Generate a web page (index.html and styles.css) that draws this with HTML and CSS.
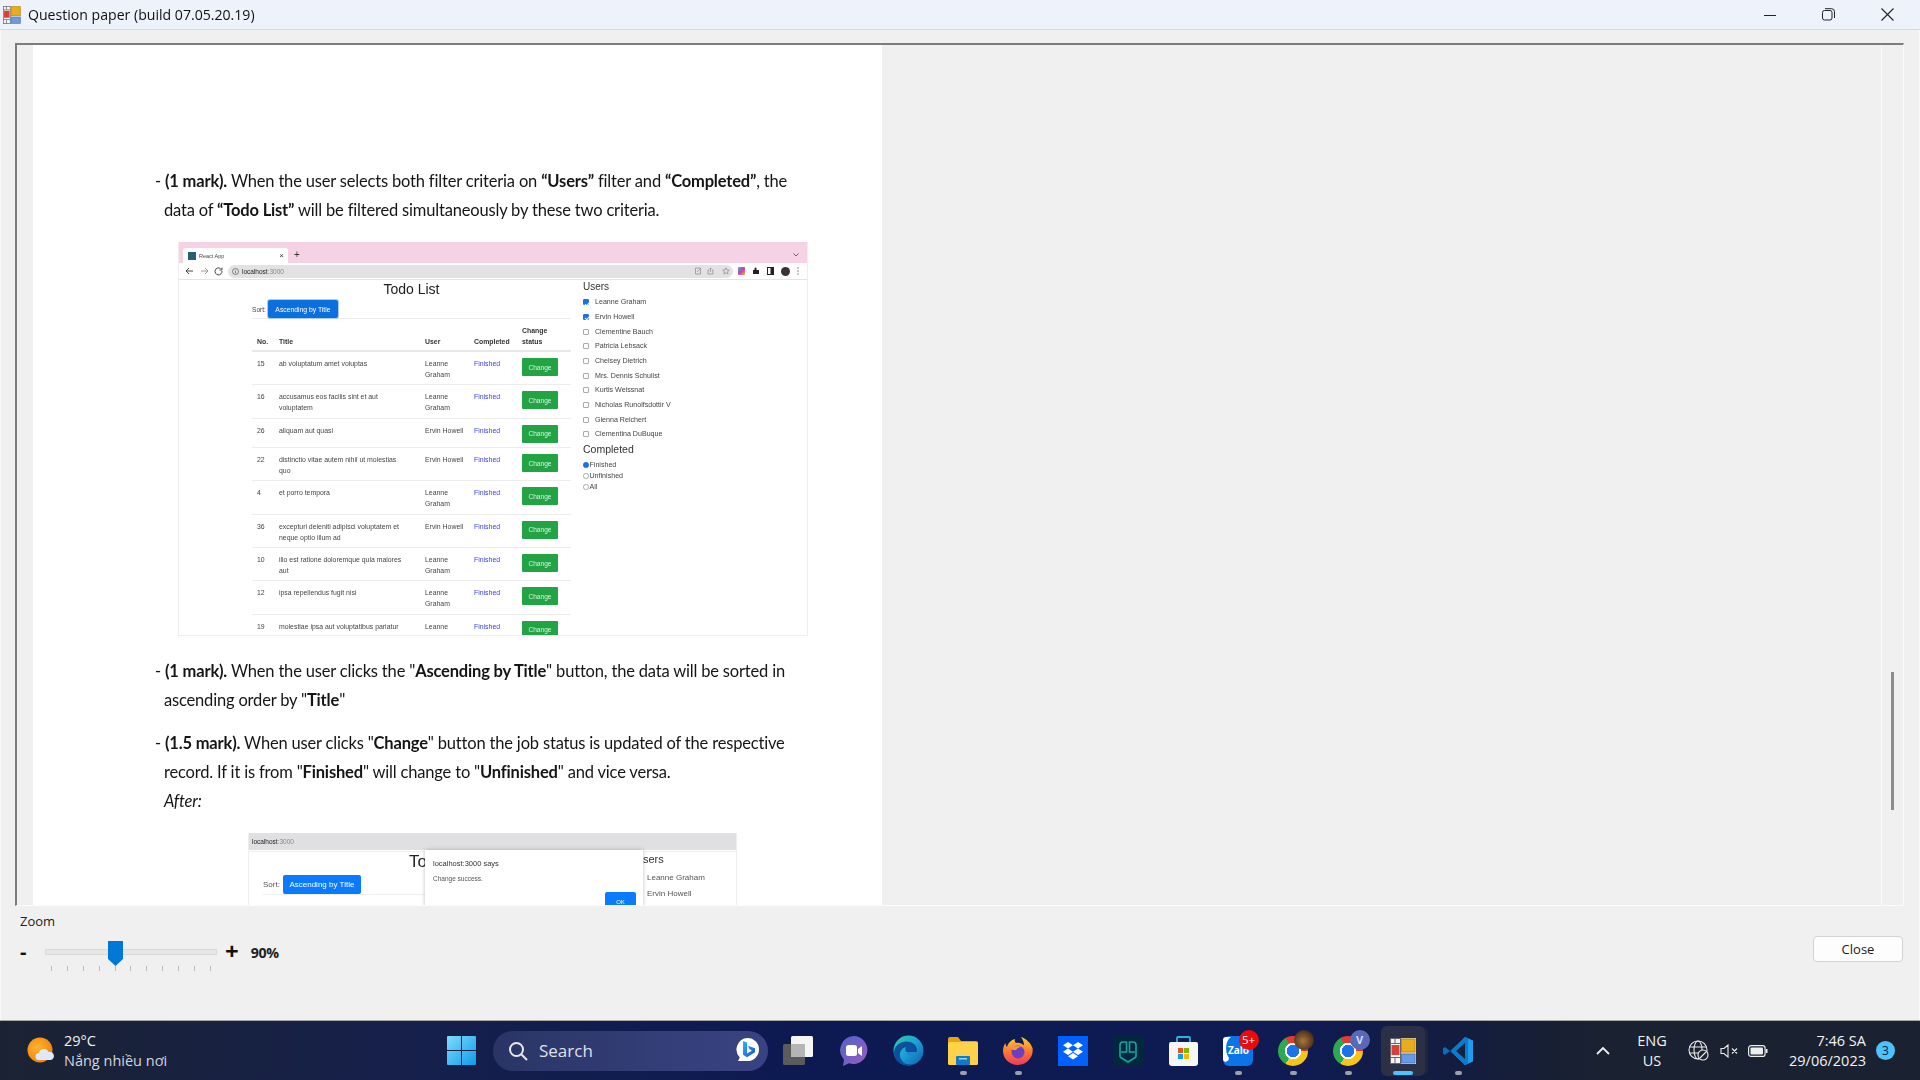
FILE: index.html
```html
<!DOCTYPE html>
<html lang="en">
<head>
<meta charset="UTF-8">
<meta name="viewport" content="width=device-width, initial-scale=1.0">
<title>Question paper</title>
<link rel="stylesheet" href="styles.css">
</head>
<body>
  <svg class="defs" width="0" height="0">
    <defs>
      <symbol id="app-icon" viewBox="0 0 26 26">
        <rect x="0" y="0" width="26" height="26" fill="#e6e8ec"/>
        <rect x="0.5" y="0.5" width="10" height="25" fill="#f4f4f4" stroke="#666"/>
        <path d="M0 5.5h10M0 19.5h10M5 20v6M5 0v5" stroke="#666"/>
        <rect x="1.500" y="7" width="8" height="10" fill="#d9403a"/>
        <rect x="11.500" y="1" width="13.500" height="13" fill="#e9ac1c" stroke="#c08a08"/>
        <rect x="11.500" y="16" width="13.500" height="9" fill="#6a9ae4" stroke="#4a7bc4"/>
      </symbol>
      <linearGradient id="win-grad" x1="0" y1="0" x2="1" y2="1">
        <stop offset="0" stop-color="#7fdcff"/>
        <stop offset="1" stop-color="#0b9be8"/>
      </linearGradient>
      <linearGradient id="meet-grad" x1="0" y1="0" x2="1" y2="1">
        <stop offset="0" stop-color="#4f63c9"/>
        <stop offset="1" stop-color="#9a5cc0"/>
      </linearGradient>
      <linearGradient id="edge-grad" x1="0" y1="0" x2="1" y2="1">
        <stop offset="0" stop-color="#2fd0a0"/>
        <stop offset="0.5" stop-color="#1c9fd8"/>
        <stop offset="1" stop-color="#0f5fa8"/>
      </linearGradient>
      <linearGradient id="fox-grad" x1="0" y1="0" x2="0" y2="1">
        <stop offset="0" stop-color="#ffcf3a"/>
        <stop offset="0.5" stop-color="#ff7a2e"/>
        <stop offset="1" stop-color="#f0385f"/>
      </linearGradient>
      <linearGradient id="bing-grad" x1="0" y1="0" x2="1" y2="1">
        <stop offset="0" stop-color="#2bb5f5"/>
        <stop offset="1" stop-color="#1a4fe0"/>
      </linearGradient>
      <radialGradient id="sun-grad" cx="0.4" cy="0.4" r="0.7">
        <stop offset="0" stop-color="#ffb52e"/>
        <stop offset="1" stop-color="#ee7d0c"/>
      </radialGradient>
    </defs>
  </svg>

  <header class="titlebar">
    <svg class="title-icon"><use href="#app-icon"/></svg>
    <span class="title-text">Question paper (build 07.05.20.19)</span>
    <div class="win-controls">
      <svg width="12" height="12" viewBox="0 0 12 12"><path d="M0 6.5h12" stroke="#222" stroke-width="1"/></svg>
      <svg width="13" height="13" viewBox="0 0 13 13" fill="none" stroke="#222"><rect x="0.5" y="2.5" width="9.5" height="9.5" rx="2"/><path d="M3 0.7h6.5a3 3 0 0 1 3 3V10"/></svg>
      <svg width="13" height="13" viewBox="0 0 13 13"><path d="M0.5 0.5l12 12M12.5 0.5l-12 12" stroke="#222" stroke-width="1.1"/></svg>
    </div>
  </header>

  <div class="window">
    <div class="viewer">
      <div class="doc-area">
        <div class="page">
          <p class="para">- <b>(1 mark).</b> When the user selects both filter criteria on <b>“Users”</b> filter and <b>“Completed”</b>, the data of <b>“Todo List”</b> will be filtered simultaneously by these two criteria.</p>

          <div class="shot">
            <div class="tabstrip">
              <div class="tab">
                <span class="favicon"></span>
                <span class="tab-name">React App</span>
                <span class="tab-x">×</span>
              </div>
              <span class="tab-plus">+</span>
              <svg class="tab-caret" width="6" height="4" viewBox="0 0 6 4"><path d="M0.5 0.5L3 3l2.5-2.5" fill="none" stroke="#666"/></svg>
            </div>
            <div class="toolbar">
              <svg width="44" height="10" viewBox="0 0 44 10" fill="none" stroke="#444">
                <path d="M9 5H2M5 2L2 5l3 3"/>
                <path d="M17 5h7M21 2l3 3-3 3" stroke="#999"/>
                <path d="M36.500 2.500A3.500 3.500 0 1 0 38 5M38 1.500v2.500h-2.500"/>
              </svg>
              <div class="addr">
                <svg width="7" height="7" viewBox="0 0 7 7" fill="none" stroke="#555" stroke-width="0.7"><circle cx="3.500" cy="3.500" r="3"/><path d="M3.500 3v2.200M3.500 1.800v0.600"/></svg>
                <span class="addr-host">localhost</span><span class="addr-port">:3000</span>
                <svg class="addr-tools" width="36" height="8" viewBox="0 0 36 8" fill="none" stroke="#888" stroke-width="0.7">
                  <path d="M0.500 1h5v6h-5zM2 5l3-3"/>
                  <path d="M14 3h-1v4h5V3h-1M15.500 5V1M14.500 2l1-1 1 1"/>
                  <path d="M31 0.800l1 2.200 2.300 0.200-1.800 1.500 0.600 2.300-2.100-1.300-2.100 1.300 0.600-2.300-1.800-1.500 2.300-0.200z"/>
                </svg>
              </div>
              <div class="tool-icons">
                <span class="ext-color"></span>
                <svg width="8" height="8" viewBox="0 0 8 8"><path d="M1 3h1.500V1.500a1 1 0 0 1 2 0V3H7v4H1z" fill="#222"/></svg>
                <svg width="7" height="8" viewBox="0 0 7 8"><rect x="0.500" y="0.500" width="6" height="7" fill="none" stroke="#222"/><rect x="3.500" y="0.500" width="3" height="7" fill="#222"/></svg>
                <span class="profile"></span>
                <svg width="2" height="8" viewBox="0 0 2 8" fill="#666"><circle cx="1" cy="1" r="0.700"/><circle cx="1" cy="4" r="0.700"/><circle cx="1" cy="7" r="0.700"/></svg>
              </div>
            </div>
            <div class="app">
              <div class="app-main">
                <h3 class="app-title">Todo List</h3>
                <div class="sort-row">
                  <span>Sort:</span>
                  <span class="btn-blue focused">Ascending by Title</span>
                </div>
                <table class="todo">
                  <thead>
                    <tr><th class="c-no">No.</th><th class="c-title">Title</th><th class="c-user">User</th><th class="c-done">Completed</th><th class="c-act">Change<br>status</th></tr>
                  </thead>
                  <tbody>
                    <tr><td>15</td><td>ab voluptatum amet voluptas</td><td>Leanne Graham</td><td class="done">Finished</td><td><span class="btn-green">Change</span></td></tr>
                    <tr><td>16</td><td>accusamus eos facilis sint et aut voluptatem</td><td>Leanne Graham</td><td class="done">Finished</td><td><span class="btn-green">Change</span></td></tr>
                    <tr><td>26</td><td>aliquam aut quasi</td><td>Ervin Howell</td><td class="done">Finished</td><td><span class="btn-green">Change</span></td></tr>
                    <tr><td>22</td><td>distinctio vitae autem nihil ut molestias quo</td><td>Ervin Howell</td><td class="done">Finished</td><td><span class="btn-green">Change</span></td></tr>
                    <tr><td>4</td><td>et porro tempora</td><td>Leanne Graham</td><td class="done">Finished</td><td><span class="btn-green">Change</span></td></tr>
                    <tr><td>36</td><td>excepturi deleniti adipisci voluptatem et neque optio illum ad</td><td>Ervin Howell</td><td class="done">Finished</td><td><span class="btn-green">Change</span></td></tr>
                    <tr><td>10</td><td>illo est ratione doloremque quia maiores aut</td><td>Leanne Graham</td><td class="done">Finished</td><td><span class="btn-green">Change</span></td></tr>
                    <tr><td>12</td><td>ipsa repellendus fugit nisi</td><td>Leanne Graham</td><td class="done">Finished</td><td><span class="btn-green">Change</span></td></tr>
                    <tr><td>19</td><td>molestiae ipsa aut voluptatibus pariatur dolor nihil</td><td>Leanne Graham</td><td class="done">Finished</td><td><span class="btn-green">Change</span></td></tr>
                  </tbody>
                </table>
              </div>
              <aside class="app-side">
                <h4 class="side-head">Users</h4>
                <ul class="user-list">
                  <li><span class="check on"></span>Leanne Graham</li>
                  <li><span class="check on"></span>Ervin Howell</li>
                  <li><span class="check"></span>Clementine Bauch</li>
                  <li><span class="check"></span>Patricia Lebsack</li>
                  <li><span class="check"></span>Chelsey Dietrich</li>
                  <li><span class="check"></span>Mrs. Dennis Schulist</li>
                  <li><span class="check"></span>Kurtis Weissnat</li>
                  <li><span class="check"></span>Nicholas Runolfsdottir V</li>
                  <li><span class="check"></span>Glenna Reichert</li>
                  <li><span class="check"></span>Clementina DuBuque</li>
                </ul>
                <h4 class="side-head second">Completed</h4>
                <ul class="radio-list">
                  <li><span class="radio on"></span>Finished</li>
                  <li><span class="radio"></span>Unfinished</li>
                  <li><span class="radio"></span>All</li>
                </ul>
              </aside>
            </div>
          </div>

          <p class="para gap-a">- <b>(1 mark).</b> When the user clicks the "<b>Ascending by Title</b>" button, the data will be sorted in ascending order by "<b>Title</b>"</p>
          <p class="para gap-b">- <b>(1.5 mark).</b> When user clicks "<b>Change</b>" button the job status is updated of the respective record. If it is from "<b>Finished</b>" will change to "<b>Unfinished</b>" and vice versa.<br><i>After:</i></p>

          <div class="shot2">
            <div class="addr2"><span class="addr-host">localhost</span><span class="addr-port">:3000</span></div>
            <div class="app2">
              <div class="app2-left">
                <div class="app2-title">To</div>
                <div class="sort-row2">
                  <span>Sort:</span>
                  <span class="btn-blue big">Ascending by Title</span>
                </div>
              </div>
              <div class="dialog">
                <div class="dialog-head">localhost:3000 says</div>
                <div class="dialog-msg">Change success.</div>
                <div class="dialog-foot"><span class="btn-ok">OK</span></div>
              </div>
              <div class="app2-right">
                <div class="app2-users">sers</div>
                <div class="app2-name">Leanne Graham</div>
                <div class="app2-name">Ervin Howell</div>
              </div>
            </div>
          </div>
        </div>
      </div>
      <div class="scroll-track"><div class="scroll-thumb"></div></div>
    </div>

    <div class="controls">
      <div class="zoom-group">
        <div class="zoom-label">Zoom</div>
        <div class="zoom-row">
          <span class="zoom-minus">-</span>
          <div class="slider">
            <div class="slider-track"></div>
            <div class="slider-thumb"></div>
            <div class="slider-ticks">
              <i></i><i></i><i></i><i></i><i></i><i></i><i></i><i></i><i></i><i></i><i></i>
            </div>
          </div>
          <span class="zoom-plus">+</span>
          <span class="zoom-value">90%</span>
        </div>
      </div>
      <button class="close-btn">Close</button>
    </div>
  </div>

  <footer class="taskbar">
    <div class="weather">
      <svg width="28" height="28" viewBox="0 0 28 28">
        <circle cx="13" cy="13" r="12.500" fill="url(#sun-grad)"/>
        <path d="M12 23a3.500 3.500 0 0 1 0-7 5 5 0 0 1 9.500-1 4 4 0 0 1 2.500 8z" fill="#dbe9f8"/>
      </svg>
      <div class="weather-text">
        <div>29°C</div>
        <div class="weather-sub">Nắng nhiều nơi</div>
      </div>
    </div>

    <div class="start">
      <svg width="29" height="29" viewBox="0 0 29 29" fill="url(#win-grad)">
        <path d="M1 0h13v14H0V1a1 1 0 0 1 1-1zM15 0h13a1 1 0 0 1 1 1v13H15zM0 15h14v14H1a1 1 0 0 1-1-1zM15 15h14v13a1 1 0 0 1-1 1H15z"/>
      </svg>
    </div>

    <div class="searchbox">
      <svg width="20" height="20" viewBox="0 0 20 20" fill="none" stroke="#e8e8ee" stroke-width="2"><circle cx="8.500" cy="8.500" r="6.500"/><path d="M13.500 13.500L19 19"/></svg>
      <span class="search-text">Search</span>
      <svg class="bing" width="25" height="27" viewBox="0 0 25 27">
        <path d="M12.500 1a11.500 11.500 0 1 1 0 23H3l1.800-3.500A11.500 11.500 0 0 1 12.500 1z" fill="#fff"/>
        <path d="M8 4l4 1.500v11l5-3-2.500-1.200-1.500-3.500 7 2.500v4l-8 5-4-2.500z" fill="url(#bing-grad)"/>
      </svg>
    </div>

    <div class="task-icons">
      <div class="slot">
        <svg width="30" height="29" viewBox="0 0 30 29">
          <rect x="0" y="8" width="22" height="21" rx="1.500" fill="#5b5b5b"/>
          <rect x="8" y="0" width="22" height="21" rx="1.500" fill="#f5f5f5"/>
          <rect x="8" y="8" width="14" height="13" fill="#b5b5b5"/>
        </svg>
      </div>
      <div class="slot">
        <svg width="29" height="30" viewBox="0 0 29 30">
          <path d="M14.500 0a14 14 0 1 1-4.500 27.300L4 30l1-6.500A14 14 0 0 1 14.500 0z" fill="url(#meet-grad)"/>
          <rect x="7" y="9" width="11" height="11" rx="2.500" fill="#fff"/>
          <path d="M19 13l4-3v10l-4-3z" fill="#fff"/>
        </svg>
      </div>
      <div class="slot">
        <svg width="31" height="31" viewBox="0 0 31 31">
          <circle cx="15.500" cy="15.500" r="15" fill="url(#edge-grad)"/>
          <path d="M1 17C2 9 10 5 17 7c6 1.700 8 7 6.500 10H14c-3-1-1-5-1-5-7 2-8 10-3 15 4 3.500 10 3 14 .5-6 6-23 4-23-10.500z" fill="#0c4f9c"/>
          <path d="M14 17h9.500c-1 4-6 5-8.500 3-1-.8-1.200-2-1-3z" fill="#1f86d0"/>
        </svg>
      </div>
      <div class="slot pip">
        <svg width="30" height="28" viewBox="0 0 30 28">
          <path d="M0 2a2 2 0 0 1 2-2h8l3 4h15a2 2 0 0 1 2 2v4H0z" fill="#e8a313"/>
          <rect x="0" y="5" width="30" height="23" rx="1.500" fill="#ffd24a"/>
          <rect x="8" y="19" width="14" height="9" rx="1" fill="#1079c9"/>
          <rect x="11" y="21" width="8" height="1.500" fill="#9ad4f8"/>
        </svg>
      </div>
      <div class="slot pip">
        <svg width="30" height="31" viewBox="0 0 30 31">
          <path d="M15 30C6 30 0 23.500 0 16c0-3 .8-6 2.500-8 0 2 .6 3 1.500 4 1-4 4-7 8-8-.5 2 0 3 1 4 3-.5 6 .5 8 2.500 0-3-1-6-3-8.500 4 1 10 6 11.500 11 1.500 8-5 17-14.500 17z" fill="url(#fox-grad)"/>
          <circle cx="15" cy="17" r="6.500" fill="#6a3fc4"/>
          <path d="M8 14c3-3 7-4 11-2-3 0-5 1-6 3-1.500 0-3.500 0-5-1z" fill="#ff9a2e"/>
        </svg>
      </div>
      <div class="slot">
        <svg width="30" height="30" viewBox="0 0 30 30">
          <rect width="30" height="30" fill="#0061ff"/>
          <path d="M10 6l5 3.200-5 3.200-5-3.200zM20 6l5 3.200-5 3.200-5-3.200zM10 12.600l5 3.200-5 3.200-5-3.200zM20 12.600l5 3.200-5 3.200-5-3.200zM15 17l5 3.200-5 3.200-5-3.200z" fill="#fff"/>
        </svg>
      </div>
      <div class="slot">
        <svg width="30" height="30" viewBox="0 0 30 30" fill="none" stroke="#16a3a8" stroke-width="1.600">
          <rect width="30" height="30" fill="#01283c" stroke="none"/>
          <path d="M7 21V9a3 3 0 0 1 3-3h3.500v10H8M23 21V9a3 3 0 0 0-3-3h-3.500v10H22M7 21l8 5 8-5"/>
        </svg>
      </div>
      <div class="slot">
        <svg width="29" height="30" viewBox="0 0 29 30">
          <path d="M8 6V2a1 1 0 0 1 1-1h11a1 1 0 0 1 1 1v4" fill="none" stroke="#2bb4dc" stroke-width="1.800"/>
          <path d="M0 8a2 2 0 0 1 2-2h25a2 2 0 0 1 2 2v19a3 3 0 0 1-3 3H3a3 3 0 0 1-3-3z" fill="#f6f6f6"/>
          <rect x="9" y="12" width="5" height="5" fill="#f25022"/>
          <rect x="15" y="12" width="5" height="5" fill="#7fba00"/>
          <rect x="9" y="18" width="5" height="5" fill="#00a4ef"/>
          <rect x="15" y="18" width="5" height="5" fill="#ffb900"/>
        </svg>
      </div>
      <div class="slot pip">
        <svg width="30" height="30" viewBox="0 0 30 30">
          <path d="M6 0h18a6 6 0 0 1 6 6v18a6 6 0 0 1-6 6H6a6 6 0 0 1-6-6V6a6 6 0 0 1 6-6z" fill="#0a74e8"/>
          <path d="M2 26c3-1 4-2 4-4C1 15 3 4 8 1H3a3 3 0 0 0-3 3v20z" fill="#fff"/>
          <text x="15.500" y="18" class="zalo-text">Zalo</text>
        </svg>
        <span class="badge-red">5+</span>
      </div>
      <div class="slot pip">
        <span class="chrome"></span>
        <span class="avatar-badge"></span>
      </div>
      <div class="slot pip">
        <span class="chrome"></span>
        <span class="v-badge">V</span>
      </div>
      <div class="slot active">
        <svg width="26" height="26"><use href="#app-icon"/></svg>
      </div>
      <div class="slot pip">
        <svg width="30" height="30" viewBox="0 0 30 30">
          <path d="M22 1l8 3.500v21L22 29 8 15.500z" fill="#1f9cf0"/>
          <path d="M22 1L7 15 2 11 0 12.500v5L2 19l5-4 15 14 3-1.500v-25z" fill="#0a78c8" opacity="0.900"/>
          <path d="M22 7v16l-9-8z" fill="#10233f"/>
        </svg>
      </div>
    </div>

    <div class="tray">
      <svg class="tray-up" width="14" height="9" viewBox="0 0 14 9"><path d="M1 8l6-6 6 6" fill="none" stroke="#f0f0f0" stroke-width="1.800"/></svg>
      <div class="lang">ENG<br>US</div>
      <svg class="tray-icon globe" width="21" height="21" viewBox="0 0 21 21" fill="none" stroke="#eee" stroke-width="1.100">
        <circle cx="10" cy="10" r="9"/>
        <ellipse cx="10" cy="10" rx="4" ry="9"/>
        <path d="M1 7h18M1 13h18"/>
        <circle cx="15" cy="15" r="5" fill="#1b2230"/>
        <path d="M12 18l6-6"/>
      </svg>
      <svg class="tray-icon" width="20" height="14" viewBox="0 0 20 14" fill="none" stroke="#eee" stroke-width="1.100">
        <path d="M1 4.500h3L8 1v12L4 9.500H1zM12 4.500l5 5M17 4.500l-5 5"/>
      </svg>
      <svg class="tray-icon" width="20" height="12" viewBox="0 0 20 12">
        <rect x="0.600" y="0.600" width="16.500" height="10.800" rx="2.500" fill="none" stroke="#eee" stroke-width="1.200"/>
        <rect x="2.500" y="2.500" width="12.500" height="7" rx="1" fill="#eee"/>
        <rect x="18" y="4" width="1.500" height="4" fill="#eee"/>
      </svg>
      <div class="clock">7:46 SA<br>29/06/2023</div>
      <span class="notif">3</span>
    </div>
  </footer>
</body>
</html>
```

FILE: styles.css
```css
* {
  box-sizing: border-box;
}

html, body {
  margin: 0;
  padding: 0;
  height: 100%;
}

body {
  width: 1920px;
  height: 1080px;
  overflow: hidden;
  display: flex;
  flex-direction: column;
  font-family: "Open Sans", "Liberation Sans", sans-serif;
  background: #f0f0f0;
}

.defs {
  position: absolute;
}

/* title bar */
.titlebar {
  height: 30px;
  flex: none;
  display: flex;
  align-items: center;
  background: #eef2fa;
  border-bottom: 1px solid #d9d9d9;
  padding-left: 3px;
}

.title-icon {
  width: 18px;
  height: 18px;
}

.title-text {
  margin-left: 7px;
  font-size: 14.1px;
  color: #111;
  filter: blur(0.3px);
}

.win-controls {
  margin-left: auto;
  display: flex;
  gap: 46px;
  align-items: center;
  padding-right: 26px;
}

/* window body */
.window {
  flex: 1;
  display: flex;
  flex-direction: column;
  border-left: 1px solid #fafafa;
  border-right: 1px solid #fafafa;
  min-height: 0;
}

.viewer {
  margin: 13px 15px 0 14px;
  height: 863px;
  flex: none;
  display: flex;
  overflow: hidden;
  border-top: 2px solid #7c7c7c;
  border-left: 2px solid #7c7c7c;
  border-right: 1px solid #fbfbfb;
  border-bottom: 1px solid #fbfbfb;
}

.doc-area {
  flex: 1;
  overflow: hidden;
  padding-left: 16px;
  border-right: 1px solid #fbfbfb;
}

.scroll-track {
  width: 21px;
  flex: none;
  padding: 627px 0 0 9px;
}

.scroll-thumb {
  width: 3px;
  height: 138px;
  background: #8c8c8c;
}

.page {
  width: 849px;
  height: 1100px;
  background: #fff;
  padding: 122px 0 0 121px;
}

.para {
  margin: 0;
  width: 650px;
  padding-left: 10px;
  text-indent: -9px;
  font-family: Lato, "Open Sans", sans-serif;
  font-size: 16.5px;
  line-height: 29px;
  color: #151515;
  letter-spacing: -0.18px;
  filter: blur(0.35px);
}

.gap-a {
  margin-top: 21px;
}

.gap-b {
  margin-top: 14px;
}

/* first embedded screenshot */
.shot {
  width: 630px;
  height: 394px;
  margin: 17px 0 0 24px;
  overflow: hidden;
  background: #fff;
  border: 1px solid #eee;
  border-top: none;
  font-family: "Liberation Sans", Arial, sans-serif;
  color: #444;
  filter: blur(0.45px);
}

.tabstrip {
  height: 21px;
  background: #f5d3e4;
  display: flex;
  align-items: flex-end;
  padding-left: 4px;
}

.tab {
  width: 105px;
  height: 15px;
  background: #fff;
  border-radius: 3px 3px 0 0;
  display: flex;
  align-items: center;
  padding: 0 4px 0 5px;
  font-size: 5.5px;
}

.favicon {
  width: 8px;
  height: 8px;
  background: #2a5f70;
  margin-right: 3px;
}

.tab-x {
  margin-left: auto;
  font-size: 8px;
  color: #333;
}

.tab-plus {
  margin: 0 0 2px 6px;
  font-size: 10px;
  line-height: 12px;
  color: #333;
}

.tab-caret {
  margin: 0 8px 6px auto;
}

.toolbar {
  height: 17px;
  display: flex;
  align-items: center;
  border-bottom: 1px solid #e4e4e4;
  padding-left: 5px;
}

.addr {
  width: 505px;
  height: 13px;
  border-radius: 7px;
  background: #e2e2e4;
  display: flex;
  align-items: center;
  padding: 0 2px 0 4px;
  font-size: 6.5px;
}

.addr svg:first-child {
  margin-right: 3px;
}

.addr-host {
  color: #222;
}

.addr-port {
  color: #888;
}

.addr-tools {
  margin-left: auto;
}

.tool-icons {
  display: flex;
  align-items: center;
  gap: 7px;
  margin-left: 5px;
}

.ext-color {
  width: 7px;
  height: 8px;
  border-radius: 1px;
  background: linear-gradient(135deg, #35b6ef, #d23bb4 50%, #e9b93a);
}

.profile {
  width: 9px;
  height: 9px;
  border-radius: 50%;
  background: #3a3232;
}

.app {
  display: flex;
  padding-left: 73px;
  gap: 12px;
}

.app-main {
  width: 319px;
  flex: none;
}

.app-title {
  margin: 0;
  height: 20px;
  line-height: 18px;
  text-align: center;
  font-size: 14px;
  font-weight: 400;
  color: #222;
}

.sort-row {
  height: 19px;
  display: flex;
  align-items: center;
  gap: 2px;
  font-size: 6.6px;
  border-bottom: 1px solid #ececec;
}

.btn-blue {
  display: inline-flex;
  align-items: center;
  justify-content: center;
  background: #0b6fe0;
  color: #fff;
  border-radius: 2px;
}

.btn-blue.focused {
  width: 70px;
  height: 18px;
  font-size: 6.8px;
  box-shadow: 0 0 0 1px #a8cdf8;
}

.todo {
  width: 319px;
  margin-top: 6px;
  border-collapse: collapse;
  table-layout: fixed;
  font-size: 6.9px;
  line-height: 11px;
}

.todo th {
  text-align: left;
  vertical-align: bottom;
  font-weight: 700;
  color: #333;
  padding: 0 0 3px 5px;
  border-bottom: 2px solid #e8e8e8;
}

.c-no { width: 22px; }
.c-title { width: 146px; }
.c-user { width: 49px; }
.c-done { width: 48px; }
.c-act { width: 54px; }

.todo td {
  vertical-align: top;
  padding: 6px 3px 4.35px 5px;
  border-bottom: 1px solid #ececec;
}

.todo td:nth-child(2) {
  padding-right: 14px;
}

.todo td.done {
  color: #3a3af0;
}

.btn-green {
  display: flex;
  align-items: center;
  justify-content: center;
  width: 36px;
  height: 18px;
  background: #22a444;
  color: #d8f2de;
  border-radius: 1px;
  font-size: 6.6px;
}

.app-side {
  font-size: 7.1px;
}

.side-head {
  margin: 0;
  font-size: 10px;
  font-weight: 400;
  line-height: 14px;
  color: #333;
}

.side-head.second {
  font-size: 10.5px;
  margin-top: 0;
}

.user-list, .radio-list {
  list-style: none;
  margin: 0;
  padding: 0;
}

.user-list {
  margin-top: 1px;
}

.user-list li {
  height: 14.66px;
  display: flex;
  align-items: center;
}

.check {
  width: 6px;
  height: 6px;
  margin-right: 6px;
  border: 0.6px solid #aaa;
  border-radius: 1px;
  background: #fff;
  position: relative;
}

.check.on {
  background: #1a6ff0;
  border-color: #1a6ff0;
}

.check.on::after {
  content: "";
  position: absolute;
  left: 1.5px;
  top: 0.3px;
  width: 2px;
  height: 3.5px;
  border-right: 0.8px solid #fff;
  border-bottom: 0.8px solid #fff;
  transform: rotate(40deg);
}

.radio-list {
  margin-top: 4px;
}

.radio-list li {
  height: 11px;
  display: flex;
  align-items: center;
}

.radio {
  width: 5.5px;
  height: 5.5px;
  border: 0.6px solid #aaa;
  border-radius: 50%;
  margin-right: 1px;
}

.radio.on {
  background: #1a6ff0;
  border-color: #1a6ff0;
}

/* second embedded screenshot, clipped by the viewer */
.shot2 {
  width: 489px;
  margin: 17px 0 0 94px;
  border: 1px solid #eee;
  border-top: none;
  font-family: "Liberation Sans", Arial, sans-serif;
  color: #555;
  filter: blur(0.4px);
}

.addr2 {
  height: 17px;
  background: #e0e0e2;
  display: flex;
  align-items: center;
  padding-left: 3px;
  font-size: 6.5px;
}

.app2 {
  display: flex;
  margin-top: 1px;
  border-top: 1px solid #eee;
}

.app2-left {
  width: 176px;
  padding-left: 14px;
}

.app2-title {
  text-align: right;
  font-size: 17px;
  line-height: 20px;
  margin-right: -2px;
  color: #222;
}

.sort-row2 {
  display: flex;
  align-items: center;
  gap: 3px;
  height: 20px;
  margin-top: 3px;
  font-size: 8px;
  border-bottom: 1px solid #eee;
}

.btn-blue.big {
  width: 78px;
  height: 19px;
  background: #0a7bff;
  font-size: 8px;
}

.dialog {
  width: 218px;
  height: 100px;
  margin-top: -2px;
  background: #fff;
  box-shadow: 0 0 4px rgba(0, 0, 0, 0.25);
  padding: 9px 8px;
  font-size: 7px;
  position: relative;
}

.dialog-head {
  font-size: 7.5px;
  color: #333;
}

.dialog-msg {
  margin-top: 7px;
  font-size: 6.5px;
}

.dialog-foot {
  margin-top: 10px;
  display: flex;
  justify-content: flex-end;
}

.btn-ok {
  width: 31px;
  height: 19px;
  margin-right: -1px;
  background: #0a7bff;
  color: #fff;
  border-radius: 2px;
  font-size: 6px;
  display: flex;
  align-items: center;
  justify-content: center;
}

.app2-users {
  font-size: 11px;
  line-height: 14px;
  color: #333;
}

.app2-name {
  margin: 4px 0 0 4px;
  height: 12px;
  font-size: 8px;
  line-height: 12px;
}

.app2-users + .app2-name {
  margin-top: 6px;
}

/* zoom controls */
.controls {
  flex: 1;
  display: flex;
  justify-content: space-between;
  padding: 6px 16px 0 19px;
}

.zoom-label {
  font-size: 13px;
  line-height: 18px;
  color: #222;
}

.zoom-row {
  display: flex;
  align-items: flex-start;
  margin-top: 11px;
}

.zoom-minus {
  width: 25px;
  font-size: 20px;
  line-height: 22px;
  font-weight: 700;
  color: #111;
}

.slider {
  width: 172px;
  height: 42px;
  position: relative;
}

.slider-track {
  height: 6px;
  margin-top: 8px;
  background: #e6e6e6;
  border: 1px solid #d8d8d8;
}

.slider-thumb {
  position: absolute;
  left: 63px;
  top: 0;
  width: 15px;
  height: 25px;
  background: #0078d7;
  clip-path: polygon(0 0, 100% 0, 100% 72%, 50% 100%, 0 72%);
}

.slider-ticks {
  display: flex;
  justify-content: space-between;
  padding: 0 6px;
  margin-top: 11px;
}

.slider-ticks i {
  width: 1px;
  height: 5px;
  background: #bcbcbc;
}

.zoom-plus {
  margin-left: 8px;
  font-size: 24px;
  line-height: 20px;
  font-weight: 700;
  color: #111;
}

.zoom-value {
  margin: 3px 0 0 12px;
  font-size: 14.2px;
  line-height: 18px;
  font-weight: 700;
  color: #222;
  letter-spacing: -0.4px;
}

.close-btn {
  width: 90px;
  height: 26px;
  margin-top: 24px;
  background: #fdfdfd;
  border: 1px solid #d2d2d2;
  border-radius: 4px;
  font-family: "Open Sans", sans-serif;
  font-size: 13px;
  color: #1a1a1a;
}

/* taskbar */
.taskbar {
  height: 60px;
  flex: none;
  display: flex;
  align-items: center;
  position: relative;
  color: #f2f2f2;
  background: linear-gradient(90deg, #1b2333 0, #16204a 380px, #0d1a52 800px, #0f1b52 1300px, #141d3c 1480px, #1a2130 1600px);
  border-top: 1px solid #a8a8a8;
}

.weather {
  width: 433px;
  flex: none;
  display: flex;
  align-items: center;
  gap: 9px;
  padding-left: 27px;
  font-size: 14.5px;
  line-height: 20px;
}

.weather-sub {
  color: #d4d6dc;
}

.start {
  width: 56px;
  flex: none;
  display: flex;
  justify-content: center;
}

.searchbox {
  width: 275px;
  height: 40px;
  flex: none;
  margin-left: 4px;
  border-radius: 20px;
  background: linear-gradient(90deg, #2a3566, #3a4382);
  display: flex;
  align-items: center;
  padding: 0 8px 0 15px;
  font-size: 17px;
  color: #dfe1ea;
}

.search-text {
  margin-left: 11px;
}

.bing {
  margin-left: auto;
}

.task-icons {
  display: flex;
  margin-left: 2.5px;
}

.slot {
  width: 55px;
  height: 50px;
  display: flex;
  align-items: center;
  justify-content: center;
  position: relative;
}

.slot.pip::after {
  content: "";
  position: absolute;
  left: 24px;
  bottom: 1px;
  width: 7px;
  height: 4px;
  border-radius: 2px;
  background: #9aa0ac;
}

.slot.active {
  background: #2b3047;
  border-radius: 6px;
  box-shadow: 5px 0 0 -2px #20253a;
  width: 44px;
  margin: 0 5.5px;
}

.slot.active::after {
  content: "";
  position: absolute;
  left: 12px;
  bottom: 1px;
  width: 20px;
  height: 4px;
  border-radius: 2px;
  background: #4cc2ff;
}

.badge-red {
  position: absolute;
  right: 7px;
  top: 4px;
  width: 20px;
  height: 20px;
  border-radius: 50%;
  background: #ea0b0b;
  color: #fff;
  font-size: 11.5px;
  line-height: 20px;
  text-align: center;
}

.zalo-text {
  font-family: "Open Sans", sans-serif;
  font-size: 10px;
  font-weight: 700;
  fill: #fff;
  text-anchor: middle;
}

.chrome {
  width: 30px;
  height: 30px;
  border-radius: 50%;
  background:
    radial-gradient(circle, #1a73e8 0 6px, #fff 6.5px 8px, transparent 8.5px),
    conic-gradient(#e33b2e 0 90deg, #f5c518 90deg 210deg, #2da94f 210deg 330deg, #e33b2e 330deg);
}

.avatar-badge {
  position: absolute;
  right: 7px;
  top: 4px;
  width: 20px;
  height: 20px;
  border-radius: 50%;
  background: radial-gradient(circle at 45% 55%, #a9763f, #4a2f18 70%);
}

.v-badge {
  position: absolute;
  right: 6px;
  top: 4px;
  width: 20px;
  height: 20px;
  border-radius: 50%;
  background: #5a68b8;
  color: #d7dcf5;
  font-size: 11px;
  font-weight: 700;
  line-height: 20px;
  text-align: center;
}

.tray {
  margin-left: auto;
  display: flex;
  align-items: center;
  padding-right: 25px;
}

.tray-up {
  margin-right: 19px;
}

.lang {
  width: 46px;
  text-align: center;
  font-size: 14.5px;
  line-height: 20px;
  margin-right: 13px;
}

.tray-icon {
  margin-right: 8px;
}

.tray-icon.globe {
  margin-right: 11px;
}

.clock {
  width: 90px;
  text-align: right;
  font-size: 14.5px;
  line-height: 20px;
}

.notif {
  width: 19px;
  height: 19px;
  margin-left: 10px;
  border-radius: 50%;
  background: #4cc2ff;
  color: #10202c;
  font-size: 12px;
  line-height: 19px;
  text-align: center;
}
```
